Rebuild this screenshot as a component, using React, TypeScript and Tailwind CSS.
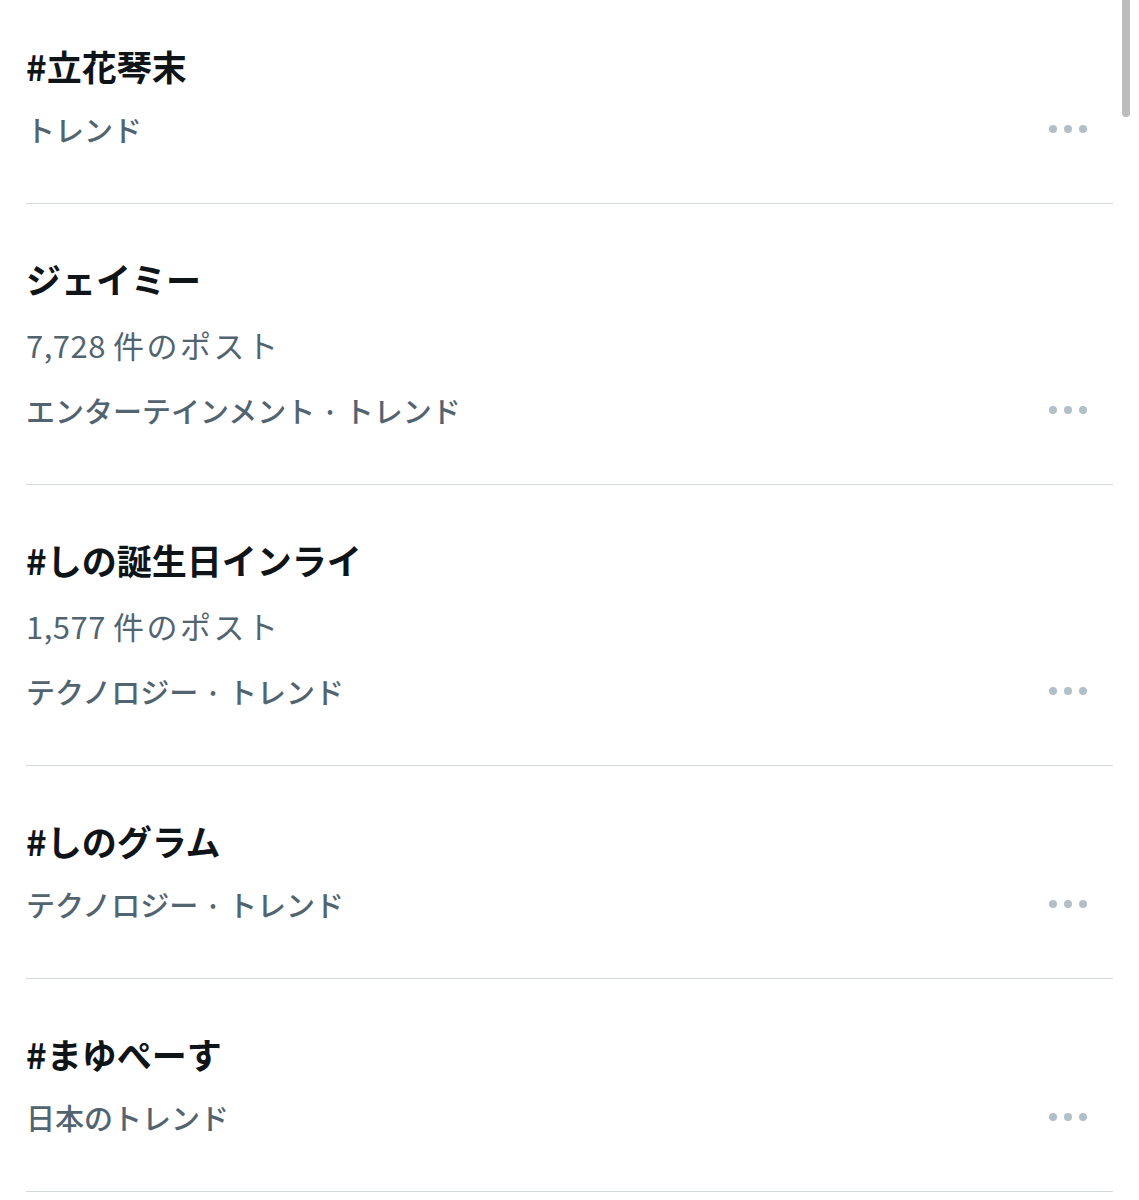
const FONT = 'font-["Noto_Sans_CJK_JP","Noto_Sans",sans-serif]';

type Trend = {
  title: string;
  posts?: string;
  category: string;
};

const trends: Trend[] = [
  { title: '#立花琴末', category: 'トレンド' },
  { title: 'ジェイミー', posts: '7,728', category: 'エンターテインメント · トレンド' },
  { title: '#しの誕生日インライ', posts: '1,577', category: 'テクノロジー · トレンド' },
  { title: '#しのグラム', category: 'テクノロジー · トレンド' },
  { title: '#まゆぺーす', category: '日本のトレンド' },
];

function MoreDots() {
  return (
    <button className="flex items-center gap-[7px] pr-[1px]" aria-label="More">
      <span className="size-[8px] rounded-full bg-[#b3bfc6]" />
      <span className="size-[8px] rounded-full bg-[#b3bfc6]" />
      <span className="size-[8px] rounded-full bg-[#b3bfc6]" />
    </button>
  );
}

function TrendRow({ trend, first }: { trend: Trend; first: boolean }) {
  return (
    <div className={`border-b border-[#d3d9dc] pb-[54px] ${first ? 'pt-[44px]' : 'pt-[53px]'}`}>
      <div className="text-[35px] leading-[44px] font-bold text-[#0f1419]">{trend.title}</div>
      {trend.posts && (
        <div className="mt-[24px] flex text-[31px] leading-[40px] font-normal text-[#536471]">
          <span className="mr-[7px] tracking-[0.5px]">{trend.posts}</span>
          <span className="tracking-[2.5px]">件のポスト</span>
        </div>
      )}
      <div
        className={`flex items-center justify-between pr-[25px] text-[29px] leading-[40px] font-medium text-[#536471] ${
          trend.posts ? 'mt-[25px]' : 'mt-[21px]'
        }`}
      >
        <span>{trend.category}</span>
        <MoreDots />
      </div>
    </div>
  );
}

export default function App() {
  return (
    <div className={`relative min-h-[1200px] w-full overflow-hidden bg-white ${FONT}`}>
      <div className="px-[26px]">
        {trends.map((t, i) => (
          <TrendRow key={t.title} trend={t} first={i === 0} />
        ))}
      </div>
      {/* scroll thumb */}
      <div className="absolute right-[9px] top-0 h-[117px] w-[8px] rounded-b-full bg-[#bcbcbc]" />
    </div>
  );
}
